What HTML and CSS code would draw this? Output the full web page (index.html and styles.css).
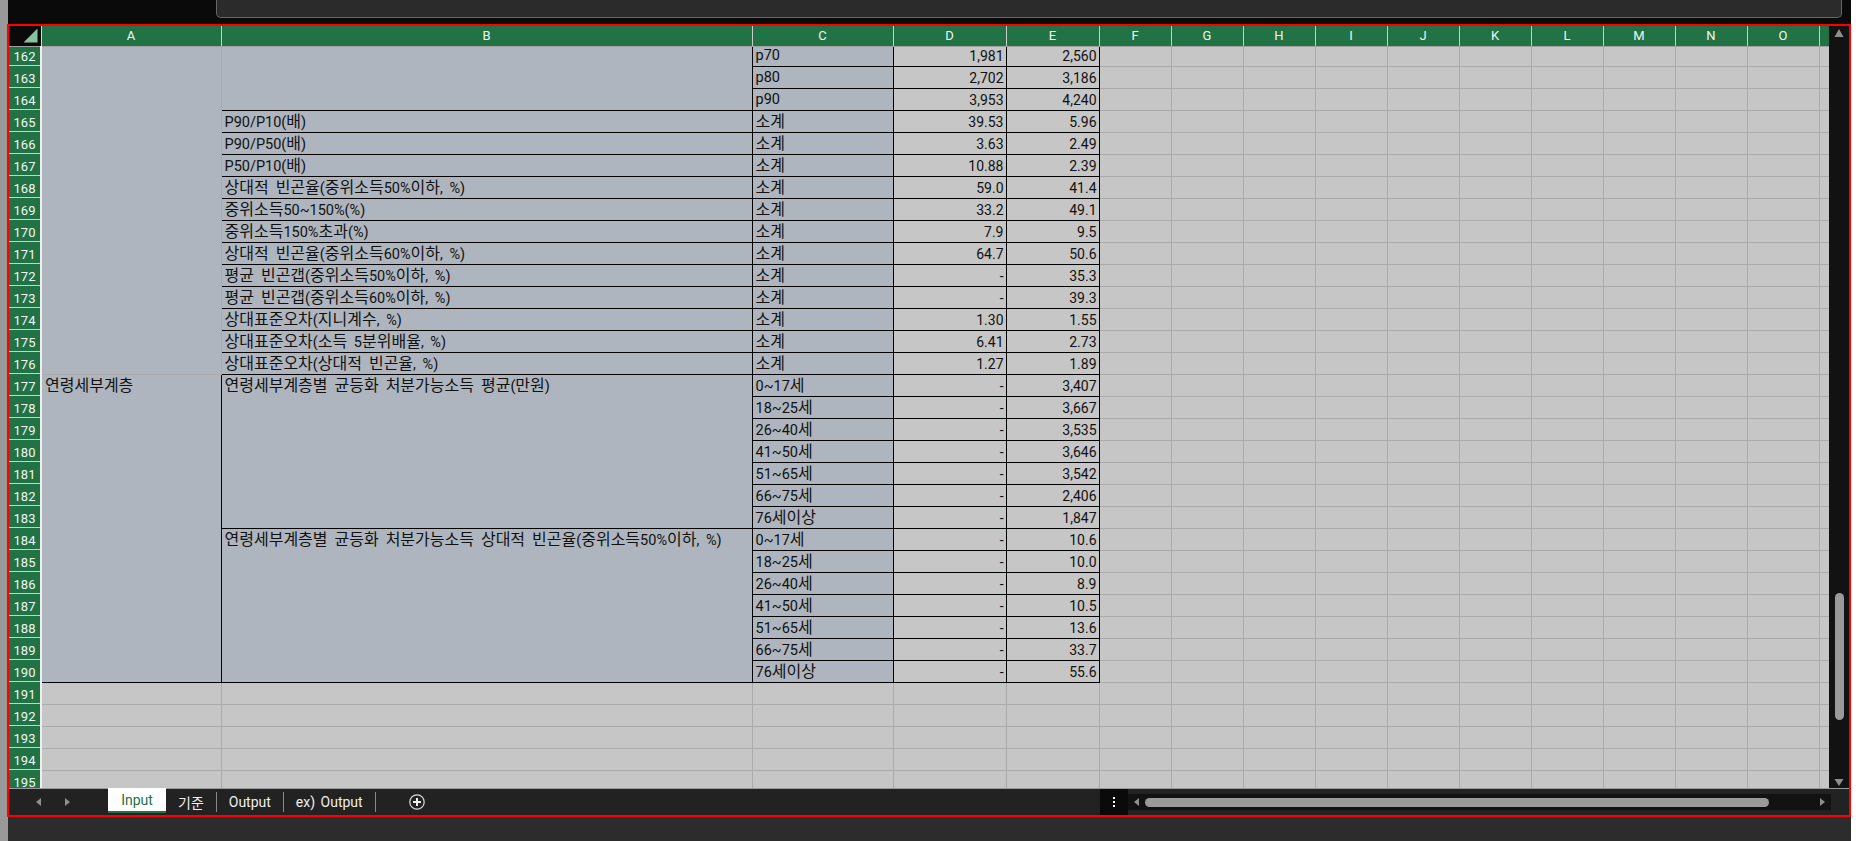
FILE: index.html
```html
<!DOCTYPE html>
<html lang="ko">
<head>
<meta charset="utf-8">
<title>Input</title>
<link rel="stylesheet" href="styles.css">
</head>
<body>
<div class="screen">
  <div class="topbar"><div class="formula"></div></div>
  <div class="window">
    <div class="main">
      <div class="sheet">
        <table class="grid">
          <colgroup>
            <col class="c-row"><col class="c-a"><col class="c-b"><col class="c-c"><col class="c-d"><col class="c-e">
            <col class="c-n"><col class="c-n"><col class="c-n"><col class="c-n"><col class="c-n"><col class="c-n"><col class="c-n"><col class="c-n"><col class="c-n"><col class="c-n"><col class="c-p">
          </colgroup>
          <thead>
            <tr><th class="corner"><span class="tri"></span></th><th>A</th><th>B</th><th>C</th><th>D</th><th>E</th><th>F</th><th>G</th><th>H</th><th>I</th><th>J</th><th>K</th><th>L</th><th>M</th><th>N</th><th>O</th><th></th></tr>
          </thead>
          <tbody>
            <tr><th>162</th><td class="s" rowspan="15"></td><td class="s bx" rowspan="3"></td><td class="s bx">p70</td><td class="n">1,981</td><td class="n">2,560</td><td></td><td></td><td></td><td></td><td></td><td></td><td></td><td></td><td></td><td></td><td></td></tr>
            <tr><th>163</th><td class="s bx">p80</td><td class="n">2,702</td><td class="n">3,186</td><td></td><td></td><td></td><td></td><td></td><td></td><td></td><td></td><td></td><td></td><td></td></tr>
            <tr><th>164</th><td class="s bx">p90</td><td class="n">3,953</td><td class="n">4,240</td><td></td><td></td><td></td><td></td><td></td><td></td><td></td><td></td><td></td><td></td><td></td></tr>
            <tr><th>165</th><td class="s bx">P90/P10(<span class="ko">배</span>)</td><td class="s bx"><span class="ko">소계</span></td><td class="n">39.53</td><td class="n">5.96</td><td></td><td></td><td></td><td></td><td></td><td></td><td></td><td></td><td></td><td></td><td></td></tr>
            <tr><th>166</th><td class="s bx">P90/P50(<span class="ko">배</span>)</td><td class="s bx"><span class="ko">소계</span></td><td class="n">3.63</td><td class="n">2.49</td><td></td><td></td><td></td><td></td><td></td><td></td><td></td><td></td><td></td><td></td><td></td></tr>
            <tr><th>167</th><td class="s bx">P50/P10(<span class="ko">배</span>)</td><td class="s bx"><span class="ko">소계</span></td><td class="n">10.88</td><td class="n">2.39</td><td></td><td></td><td></td><td></td><td></td><td></td><td></td><td></td><td></td><td></td><td></td></tr>
            <tr><th>168</th><td class="s bx"><span class="ko">상대적 빈곤율</span>(<span class="ko">중위소득</span>50%<span class="ko">이하</span>, %)</td><td class="s bx"><span class="ko">소계</span></td><td class="n">59.0</td><td class="n">41.4</td><td></td><td></td><td></td><td></td><td></td><td></td><td></td><td></td><td></td><td></td><td></td></tr>
            <tr><th>169</th><td class="s bx"><span class="ko">중위소득</span>50~150%(%)</td><td class="s bx"><span class="ko">소계</span></td><td class="n">33.2</td><td class="n">49.1</td><td></td><td></td><td></td><td></td><td></td><td></td><td></td><td></td><td></td><td></td><td></td></tr>
            <tr><th>170</th><td class="s bx"><span class="ko">중위소득</span>150%<span class="ko">초과</span>(%)</td><td class="s bx"><span class="ko">소계</span></td><td class="n">7.9</td><td class="n">9.5</td><td></td><td></td><td></td><td></td><td></td><td></td><td></td><td></td><td></td><td></td><td></td></tr>
            <tr><th>171</th><td class="s bx"><span class="ko">상대적 빈곤율</span>(<span class="ko">중위소득</span>60%<span class="ko">이하</span>, %)</td><td class="s bx"><span class="ko">소계</span></td><td class="n">64.7</td><td class="n">50.6</td><td></td><td></td><td></td><td></td><td></td><td></td><td></td><td></td><td></td><td></td><td></td></tr>
            <tr><th>172</th><td class="s bx"><span class="ko">평균 빈곤갭</span>(<span class="ko">중위소득</span>50%<span class="ko">이하</span>, %)</td><td class="s bx"><span class="ko">소계</span></td><td class="n">-</td><td class="n">35.3</td><td></td><td></td><td></td><td></td><td></td><td></td><td></td><td></td><td></td><td></td><td></td></tr>
            <tr><th>173</th><td class="s bx"><span class="ko">평균 빈곤갭</span>(<span class="ko">중위소득</span>60%<span class="ko">이하</span>, %)</td><td class="s bx"><span class="ko">소계</span></td><td class="n">-</td><td class="n">39.3</td><td></td><td></td><td></td><td></td><td></td><td></td><td></td><td></td><td></td><td></td><td></td></tr>
            <tr><th>174</th><td class="s bx"><span class="ko">상대표준오차</span>(<span class="ko">지니계수</span>, %)</td><td class="s bx"><span class="ko">소계</span></td><td class="n">1.30</td><td class="n">1.55</td><td></td><td></td><td></td><td></td><td></td><td></td><td></td><td></td><td></td><td></td><td></td></tr>
            <tr><th>175</th><td class="s bx"><span class="ko">상대표준오차</span>(<span class="ko">소득</span> 5<span class="ko">분위배율</span>, %)</td><td class="s bx"><span class="ko">소계</span></td><td class="n">6.41</td><td class="n">2.73</td><td></td><td></td><td></td><td></td><td></td><td></td><td></td><td></td><td></td><td></td><td></td></tr>
            <tr><th>176</th><td class="s bx"><span class="ko">상대표준오차</span>(<span class="ko">상대적 빈곤율</span>, %)</td><td class="s bx"><span class="ko">소계</span></td><td class="n">1.27</td><td class="n">1.89</td><td></td><td></td><td></td><td></td><td></td><td></td><td></td><td></td><td></td><td></td><td></td></tr>
            <tr><th>177</th><td class="s bx top" rowspan="14"><span class="ko">연령세부계층</span></td><td class="s bx top" rowspan="7"><span class="ko">연령세부계층별 균등화 처분가능소득 평균</span>(<span class="ko">만원</span>)</td><td class="s bx">0~17<span class="ko">세</span></td><td class="n">-</td><td class="n">3,407</td><td></td><td></td><td></td><td></td><td></td><td></td><td></td><td></td><td></td><td></td><td></td></tr>
            <tr><th>178</th><td class="s bx">18~25<span class="ko">세</span></td><td class="n">-</td><td class="n">3,667</td><td></td><td></td><td></td><td></td><td></td><td></td><td></td><td></td><td></td><td></td><td></td></tr>
            <tr><th>179</th><td class="s bx">26~40<span class="ko">세</span></td><td class="n">-</td><td class="n">3,535</td><td></td><td></td><td></td><td></td><td></td><td></td><td></td><td></td><td></td><td></td><td></td></tr>
            <tr><th>180</th><td class="s bx">41~50<span class="ko">세</span></td><td class="n">-</td><td class="n">3,646</td><td></td><td></td><td></td><td></td><td></td><td></td><td></td><td></td><td></td><td></td><td></td></tr>
            <tr><th>181</th><td class="s bx">51~65<span class="ko">세</span></td><td class="n">-</td><td class="n">3,542</td><td></td><td></td><td></td><td></td><td></td><td></td><td></td><td></td><td></td><td></td><td></td></tr>
            <tr><th>182</th><td class="s bx">66~75<span class="ko">세</span></td><td class="n">-</td><td class="n">2,406</td><td></td><td></td><td></td><td></td><td></td><td></td><td></td><td></td><td></td><td></td><td></td></tr>
            <tr><th>183</th><td class="s bx">76<span class="ko">세이상</span></td><td class="n">-</td><td class="n">1,847</td><td></td><td></td><td></td><td></td><td></td><td></td><td></td><td></td><td></td><td></td><td></td></tr>
            <tr><th>184</th><td class="s bx top" rowspan="7"><span class="ko">연령세부계층별 균등화 처분가능소득 상대적 빈곤율</span>(<span class="ko">중위소득</span>50%<span class="ko">이하</span>, %)</td><td class="s bx">0~17<span class="ko">세</span></td><td class="n">-</td><td class="n">10.6</td><td></td><td></td><td></td><td></td><td></td><td></td><td></td><td></td><td></td><td></td><td></td></tr>
            <tr><th>185</th><td class="s bx">18~25<span class="ko">세</span></td><td class="n">-</td><td class="n">10.0</td><td></td><td></td><td></td><td></td><td></td><td></td><td></td><td></td><td></td><td></td><td></td></tr>
            <tr><th>186</th><td class="s bx">26~40<span class="ko">세</span></td><td class="n">-</td><td class="n">8.9</td><td></td><td></td><td></td><td></td><td></td><td></td><td></td><td></td><td></td><td></td><td></td></tr>
            <tr><th>187</th><td class="s bx">41~50<span class="ko">세</span></td><td class="n">-</td><td class="n">10.5</td><td></td><td></td><td></td><td></td><td></td><td></td><td></td><td></td><td></td><td></td><td></td></tr>
            <tr><th>188</th><td class="s bx">51~65<span class="ko">세</span></td><td class="n">-</td><td class="n">13.6</td><td></td><td></td><td></td><td></td><td></td><td></td><td></td><td></td><td></td><td></td><td></td></tr>
            <tr><th>189</th><td class="s bx">66~75<span class="ko">세</span></td><td class="n">-</td><td class="n">33.7</td><td></td><td></td><td></td><td></td><td></td><td></td><td></td><td></td><td></td><td></td><td></td></tr>
            <tr><th>190</th><td class="s bx">76<span class="ko">세이상</span></td><td class="n">-</td><td class="n">55.6</td><td></td><td></td><td></td><td></td><td></td><td></td><td></td><td></td><td></td><td></td><td></td></tr>
            <tr><th>191</th><td></td><td></td><td></td><td></td><td></td><td></td><td></td><td></td><td></td><td></td><td></td><td></td><td></td><td></td><td></td><td></td></tr>
            <tr><th>192</th><td></td><td></td><td></td><td></td><td></td><td></td><td></td><td></td><td></td><td></td><td></td><td></td><td></td><td></td><td></td><td></td></tr>
            <tr><th>193</th><td></td><td></td><td></td><td></td><td></td><td></td><td></td><td></td><td></td><td></td><td></td><td></td><td></td><td></td><td></td><td></td></tr>
            <tr><th>194</th><td></td><td></td><td></td><td></td><td></td><td></td><td></td><td></td><td></td><td></td><td></td><td></td><td></td><td></td><td></td><td></td></tr>
            <tr><th>195</th><td></td><td></td><td></td><td></td><td></td><td></td><td></td><td></td><td></td><td></td><td></td><td></td><td></td><td></td><td></td><td></td></tr>
          </tbody>
        </table>
      </div>
      <div class="vscroll">
        <svg class="arrow" width="14" height="10" viewBox="0 0 14 10"><path d="M7 1 L11.5 9 H2.5 Z"/></svg>
        <div class="vtrack"><div class="vthumb"></div></div>
        <svg class="arrow" width="14" height="10" viewBox="0 0 14 10"><path d="M7 9 L11.5 2 H2.5 Z"/></svg>
      </div>
    </div>
    <div class="tabbar">
      <div class="tabnav">
        <svg width="8" height="10" viewBox="0 0 8 10"><path d="M6 1 V9 L1 5 Z"/></svg>
        <svg width="8" height="10" viewBox="0 0 8 10"><path d="M2 1 V9 L7 5 Z"/></svg>
      </div>
      <div class="tabs">
        <div class="tab active">Input</div>
        <div class="tab sep">기준</div>
        <div class="tab sep">Output</div>
        <div class="tab sep">ex) Output</div>
      </div>
      <svg class="addsheet" width="18" height="18" viewBox="0 0 18 18"><circle cx="9" cy="9" r="7.2"/><path d="M9 5 V13 M5 9 H13"/></svg>
      <div class="splitter"><i></i><i></i><i></i></div>
      <div class="hscroll">
        <svg width="8" height="10" viewBox="0 0 8 10"><path d="M6 1 V9 L1 5 Z"/></svg>
        <div class="htrack"><div class="hthumb"></div></div>
        <svg width="8" height="10" viewBox="0 0 8 10"><path d="M2 1 V9 L7 5 Z"/></svg>
      </div>
    </div>
  </div>
  <div class="statusbar"></div>
</div>
</body>
</html>
```
FILE: styles.css
```css
* { box-sizing: border-box; }
html, body { margin: 0; padding: 0; height: 100%; background: #fff; overflow: hidden; }
body { font-family: Roboto, "Noto Sans CJK KR", sans-serif; }
.screen { width: 1851px; height: 841px; display: flex; flex-direction: column; padding-left: 8px; background: #999; }
.topbar { height: 24px; background: #0a0a0a; padding-left: 208px; padding-right: 9px; flex: none; }
.formula { height: 18px; background: #2b2b2b; border: 1px solid #666; border-top: 0; border-radius: 0 0 5px 5px; }
.window { flex: none; height: 793px; border: 2px solid #f00; margin-left: -1px; display: flex; flex-direction: column; background: #222; }
.main { flex: 1; display: flex; min-height: 0; background: #121212; }
.sheet { width: 1820px; overflow: hidden; background: #c6c6c6; flex: none; }
.grid { border-collapse: collapse; table-layout: fixed; width: 1820px; font-size: 14px; color: #111; }
.c-row { width: 32px; } .c-a { width: 180px; } .c-b { width: 531px; } .c-c { width: 141px; } .c-d { width: 113px; } .c-e { width: 93px; } .c-n { width: 72px; } .c-p { width: 10px; }
.grid tr { height: 22px; }
.grid thead tr { height: 20px; }
.grid thead th { background: #217346; color: #f0f6f2; font-weight: 400; font-size: 13px; line-height: 14px; border: 0; border-right: 1px solid #c4cfc8; border-bottom: 1px solid #a0a0a0; padding: 0; }
.grid thead th.corner { background: #0a0a0a; position: relative; border-right: 1px solid #d8d8d8; }
.tri { position: absolute; right: 3px; bottom: 3px; width: 14px; height: 14px; background: #8ac2a0; clip-path: polygon(100% 0, 100% 100%, 0 100%); }
.grid tbody th { background: linear-gradient(#c4d4ca, #c4d4ca) left bottom / 31px 1px no-repeat, #217346; color: #f0f6f2; font-weight: 400; font-size: 13px; line-height: 14px; padding: 4px 0 0; border: 0; border-right: 2px solid #eee; }
.grid td { border: 1px solid #ababab; padding: 2px 2px 0 3px; height: 22px; line-height: 18px; white-space: nowrap; overflow: hidden; background: #c6c6c6; }
.grid td.s { background: #aeb5be; font-size: 14.5px; word-spacing: 3px; }
.ko { font-size: 16px; }
.grid td.bx { border: 1px solid #000; }
.grid td.top { vertical-align: top; }
.grid td.n { text-align: right; border: 1px solid #000; }
.grid tbody tr:first-child { height: 20px; }
.grid tbody tr:first-child th { height: 20px; padding-top: 2px; }
.grid tbody tr:first-child td { height: 20px; padding-top: 0; border-top: 0; }
.vscroll { flex: 1; display: flex; flex-direction: column; align-items: center; padding: 2px 0 1px; }
.arrow path { fill: #8f8f8f; }
.vtrack { flex: 1; width: 100%; position: relative; }
.vthumb { position: absolute; left: 6px; width: 9px; top: 555px; height: 127px; background: #9a9a9a; border-radius: 5px; }
.tabbar { flex: none; height: 27px; display: flex; align-items: center; background: #222; border-top: 1px solid #9a9a9a; color: #eee; font-size: 14px; }
.tabbar svg path { fill: #8f8f8f; }
.tabnav { width: 99px; display: flex; gap: 20px; padding-left: 26px; }
.tabs { display: flex; align-self: flex-start; height: 25px; margin-top: -1px; }
.tab { padding: 0 12px; display: flex; align-items: center; word-spacing: 2px; }
.tab.active { background: #fff; color: #217346; border-bottom: 2px solid #217346; width: 58px; justify-content: center; padding: 0; }
.tab.sep { border-right: 1px solid #8a8a8a; margin: 4px 0 1px; }
.addsheet { margin-left: 32px; }
.addsheet circle { fill: none; stroke: #ddd; stroke-width: 1.2; }
.tabbar .addsheet path { stroke: #eee; stroke-width: 2; fill: none; }
.splitter { margin-left: auto; width: 28px; align-self: stretch; background: #0a0a0a; display: flex; flex-direction: column; align-items: center; justify-content: center; gap: 2px; }
.splitter i { width: 2px; height: 2px; background: #fff; }
.hscroll { width: 703px; height: 16px; background: #121212; margin-right: 18px; display: flex; align-items: center; justify-content: space-between; padding: 0 5px; }
.htrack { flex: 1; padding-left: 4px; }
.hthumb { width: 624px; height: 9px; background: #9a9a9a; border-radius: 5px; }
.statusbar { flex: 1; background: #2c2c2c; }
```
